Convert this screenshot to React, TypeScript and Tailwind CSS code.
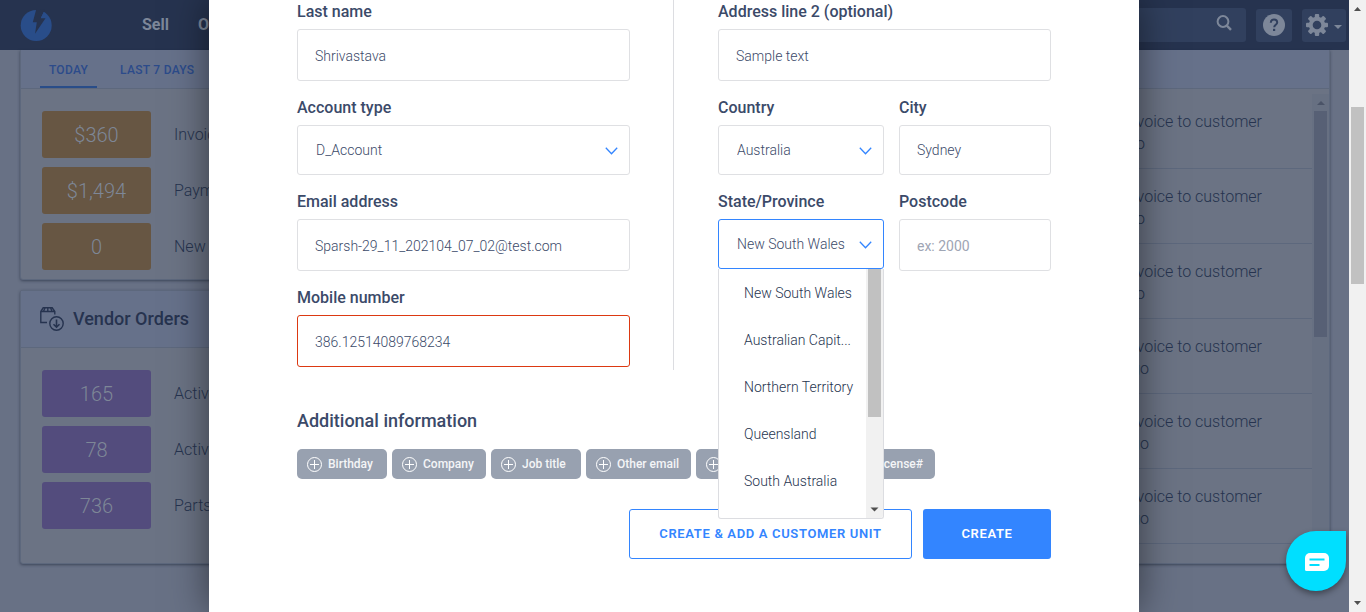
import React from 'react';

type FieldProps = {
  id: string;
  label: string;
  value?: string;
  placeholder?: string;
  box?: string;
};

function Label({ id, children }: { id: string; children: React.ReactNode }) {
  return (
    <label htmlFor={id} className="block text-base font-medium whitespace-nowrap text-[#3b4a69]">
      {children}
    </label>
  );
}

function TextField({ id, label, value, placeholder, box = 'h-[52px] border-[#dfe0e3] pt-[2px]' }: FieldProps) {
  return (
    <div className="flex min-w-0 flex-col gap-[5px]">
      <Label id={id}>{label}</Label>
      <input
        id={id}
        defaultValue={value}
        placeholder={placeholder}
        className={`w-full rounded-[3px] border bg-white px-[17px] text-sm font-light text-[#3b4a69] outline-none placeholder:font-normal placeholder:text-[#9ea5b4] ${box}`}
      />
    </div>
  );
}

function SelectField({ id, label, value, open, children }: { id: string; label: string; value: string; open?: boolean; children?: React.ReactNode }) {
  return (
    <div className="flex min-w-0 flex-col gap-[5px]">
      <Label id={id}>{label}</Label>
      <div className="relative">
        <select
          id={id}
          className={`h-[50px] w-full appearance-none rounded-[3px] border bg-white pr-8 pl-[18px] text-sm font-light text-[#3b4a69] outline-none ${open ? 'border-[#3385ff]' : 'border-[#dfe0e3]'}`}
        >
          <option>{value}</option>
        </select>
        <svg className="pointer-events-none absolute top-[22px] right-3 h-2 w-[13px]" viewBox="0 0 13 8" fill="none" stroke="#3385ff" strokeWidth="1.3">
          <path d="M.8 .8 6.5 6.8 12.2 .8" />
        </svg>
        {children}
      </div>
    </div>
  );
}

const states = ['New South Wales', 'Australian Capit...', 'Northern Territory', 'Queensland', 'South Australia'];

function StateMenu() {
  return (
    <div className="absolute top-full right-0 left-0 z-10 flex h-[250px] overflow-hidden rounded-b-[3px] border border-t-0 border-[#dcdde1] bg-white">
      <ul role="listbox" aria-label="State/Province" className="min-w-0 flex-1">
        {states.map((s) => (
          <li key={s} role="option" aria-selected={s === 'New South Wales'} className="flex h-[47px] items-center pl-[25px] text-sm font-light whitespace-nowrap text-[#26344f]">
            {s}
          </li>
        ))}
      </ul>
      <div className="flex w-[17px] flex-col justify-between bg-[#f1f1f1] px-[2px]">
        <div className="h-[148px] bg-[#c1c1c1]" />
        <svg className="mb-[6px] h-[5px] w-[13px]" viewBox="0 0 13 5" fill="#505050">
          <path d="M2.5 .5h8L6.500 4.500z" />
        </svg>
      </div>
    </div>
  );
}

const chips: [string, string][] = [
  ['Birthday', 'w-[90px]'],
  ['Company', 'w-[94px]'],
  ['Job title', 'w-[90px]'],
  ['Other email', 'w-[105px]'],
  ['Other phone', 'w-[111px]'],
  ['Driver license#', 'w-[123px]'],
];

function Modal() {
  return (
    <section role="dialog" aria-label="New customer" className="w-[930px] bg-white px-[88px] pb-[53px] shadow-[0_0_36px_rgba(0,0,0,0.5)]">
      <form>
        <div className="grid grid-cols-2">
          <div className="flex flex-col gap-[15px] border-r border-[#dcdde1] pr-[43px] pb-[3px]">
            <TextField id="last" label="Last name" value="Shrivastava" />
            <SelectField id="acct" label="Account type" value="D_Account" />
            <TextField id="email" label="Email address" value="Sparsh-29_11_202104_07_02@test.com" />
            <TextField id="mobile" label="Mobile number" value="386.12514089768234" box="h-[52px] border-[#dc3912] pt-px" />
          </div>
          <div className="flex flex-col gap-[15px] pl-[44px]">
            <TextField id="addr2" label="Address line 2 (optional)" value="Sample text" />
            <div className="grid grid-cols-[166fr_152fr] gap-[15px]">
              <SelectField id="country" label="Country" value="Australia" />
              <TextField id="city" label="City" value="Sydney" box="h-[50px] border-[#dfe0e3]" />
              <SelectField id="state" label="State/Province" value="New South Wales" open>
                <StateMenu />
              </SelectField>
              <TextField id="post" label="Postcode" placeholder="ex: 2000" />
            </div>
          </div>
        </div>
        <h2 className="mt-[39px] text-lg leading-6 font-medium text-[#3b4a69]">Additional information</h2>
        <div className="mt-4 flex gap-[5px]">
          {chips.map(([text, width]) => (
            <button key={text} type="button" className={`flex h-[30px] items-center gap-[6px] rounded-[5px] bg-[#98a1b0] pl-[10px] text-xs font-medium whitespace-nowrap text-[#f4f5f7] ${width}`}>
              <svg className="h-[15px] w-[15px] shrink-0" viewBox="0 0 15 15" fill="none" stroke="#fff" strokeWidth="1">
                <circle cx="7.500" cy="7.500" r="7" />
                <path d="M7.500 3v9M3 7.500h9" />
              </svg>
              {text}
            </button>
          ))}
        </div>
        <div className="mt-[30px] flex justify-end gap-[11px] text-[13px] font-semibold tracking-wider whitespace-nowrap">
          <button type="button" className="h-[50px] w-[283px] rounded-[3px] border border-[#3385ff] bg-white text-[#3385ff]">
            CREATE &amp; ADD A CUSTOMER UNIT
          </button>
          <button type="button" className="h-[50px] w-32 rounded-[3px] bg-[#3385ff] text-white">
            CREATE
          </button>
        </div>
      </form>
    </section>
  );
}

function Stats({ rows, tile }: { rows: [string, string][]; tile: string }) {
  return (
    <ul className="flex flex-col gap-[9px] px-[21px] pt-[22px]">
      {rows.map(([n, text]) => (
        <li key={n} className="flex items-center gap-[23px]">
          <span className={`flex h-[47px] w-[109px] items-center justify-center rounded-[3px] text-xl font-light text-[#7e8797] ${tile}`}>{n}</span>
          <span className="text-base font-light text-[#26334f]">{text}</span>
        </li>
      ))}
    </ul>
  );
}

function TopBar() {
  return (
    <header className="flex h-[50px] items-center bg-[#26334f] pr-[3px] pl-5 text-[#7d8799]">
      <svg className="h-8 w-8" viewBox="0 0 32 32">
        <circle cx="16.200" cy="16.500" r="15.500" fill="#294d89" />
        <path d="M16.300 0 12.800 13.300h4L15 24.800 25.500 9.200h-4.700L23 4.500 24.500 1 20 0z" fill="#26334f" />
        <path d="M23.800 3 20.800 9h4.700l2-2.800A15.500 15.500 0 0 0 23.800 3z" fill="#294d89" />
      </svg>
      <nav className="ml-[90px] flex gap-[29px] text-base font-bold">
        <a href="#sell">Sell</a>
        <a href="#orders">Orders</a>
      </nav>
      <div className="ml-auto flex items-center gap-[10px]">
        <div className="flex h-[34px] w-[220px] items-center justify-end rounded-[3px] bg-[#31405e] pr-[14px] pb-1">
          <svg className="h-4 w-4" viewBox="0 0 16 16" fill="none" stroke="currentColor" strokeWidth="2">
            <circle cx="7" cy="6.500" r="5.400" />
            <path d="m10.800 10.600 4.200 4.200" strokeWidth="2.400" />
          </svg>
        </div>
        <button aria-label="Help" className="flex h-[33px] w-9 items-center justify-center rounded-[3px] bg-[#31405e]">
          <svg className="h-[22px] w-[22px]" viewBox="0 0 22 22" fill="none">
            <circle cx="11" cy="11" r="11" fill="#7d8799" />
            <path d="M7.800 8.700C7.800 6.700 9.200 5.600 11 5.600s3.200 1.100 3.200 2.800c0 2.200-3 2.500-3 4.800" stroke="#31405e" strokeWidth="2" />
            <path d="M10 14.800h2.200V17H10z" fill="#31405e" />
          </svg>
        </button>
        <button aria-label="Settings" className="flex h-[33px] w-11 items-center justify-between rounded-[3px] bg-[#31405e] px-1">
          <svg className="h-[22px] w-[22px]" viewBox="0 0 22 22">
            <g fill="#7d8799">
              <circle cx="11" cy="11" r="8.200" />
              {[0, 45, 90, 135].map((a) => (
                <rect key={a} x="8.800" y="0" width="4.400" height="22" rx="1" transform={`rotate(${a} 11 11)`} />
              ))}
            </g>
            <circle cx="11" cy="11" r="4.300" fill="#31405e" />
          </svg>
          <svg className="mt-1 h-1 w-2" viewBox="0 0 8 4" fill="#7d8799">
            <path d="M0 0h8L4 4z" />
          </svg>
        </button>
      </div>
    </header>
  );
}

const card = 'border border-[#5d687d] bg-[#6b7384] shadow-[0_1px_3px_rgba(30,40,60,0.6)]';
const ages = ['1 day ago', '1 day ago', '1 day ago', '2 days ago', '2 days ago', '2 days ago'];

function Dashboard() {
  return (
    <div className="grid grid-cols-2 gap-5 pr-[19px] pl-5">
      <div className="flex flex-col gap-[10px]">
        <div className={`rounded-b-[3px] border-t-0 pb-[9px] ${card}`}>
          <div className="flex h-[39px] items-end gap-[13px] border-b border-[#5d687d] bg-[#66718a] pl-[19px] text-xs font-medium tracking-wide text-[#2c4b8a]">
            <a href="#today" className="flex h-9 w-[57px] items-start justify-center border-b-2 border-[#294d89] pt-[10px]">TODAY</a>
            <a href="#week" className="h-9 pt-[10px] pl-[10px]">LAST 7 DAYS</a>
          </div>
          <Stats tile="bg-[#675643]" rows={[['$360', 'Invoices'], ['$1,494', 'Payments'], ['0', 'New customers']]} />
        </div>
        <div className={`rounded-[3px] pb-[34px] ${card}`}>
          <div className="flex h-[57px] items-center gap-[9px] border-b border-[#5d687d] bg-[#66718a] pl-[19px]">
            <svg className="h-6 w-6" viewBox="0 0 24 24" fill="none" stroke="#26334f" strokeWidth="1.400">
              <path d="M7 15.500H.8V4.500L3.200.8h9l2.600 3.700V7.500M.8 4.500h14M7.800 .8v3.700M3.500 4.300 5 1M12 4.300 10.600 1" />
              <circle cx="16.500" cy="16.500" r="6.700" />
              <path d="M16.500 12.500v7.500M13.500 17.200l3 3 3-3" strokeWidth="1.600" />
            </svg>
            <h2 className="text-lg font-medium text-[#26334f]">Vendor Orders</h2>
          </div>
          <Stats tile="bg-[#534c7d]" rows={[['165', 'Active orders'], ['78', 'Active quotes'], ['736', 'Parts on order']]} />
        </div>
      </div>
      <div className={`flex flex-col rounded-b-[3px] border-t-0 ${card}`}>
        <div className="h-[39px] border-b border-[#5d687d] bg-[#66718a]" />
        <div className="flex flex-1 pt-[5px]">
          <ul className="flex-1 text-base leading-[22px] font-light text-[#26334f]">
            {ages.map((age, i) => (
              <li key={i} className="h-[75px] border-b border-[#5d687d] pt-[17px] text-right">
                <p className="pr-[50px]">Sent invoice to customer</p>
                <p className={i < 3 ? 'pr-[167px]' : 'pr-[163px]'}>{age}</p>
              </li>
            ))}
          </ul>
          <div className="flex w-[17px] flex-col items-center bg-[#677082]">
            <svg className="mt-[7px] mb-[6px] h-1 w-2" viewBox="0 0 8 4" fill="#4a5367">
              <path d="M0 4h8L4 0z" />
            </svg>
            <div className="h-[226px] w-[13px] bg-[#576075]" />
          </div>
        </div>
      </div>
    </div>
  );
}

export default function App() {
  return (
    <div className="flex min-h-screen font-[Roboto,'Liberation_Sans',sans-serif]">
      <main className="relative min-w-0 flex-1 overflow-hidden bg-[#687185]">
        <TopBar />
        <Dashboard />
        <div className="absolute inset-0 flex justify-center pr-px">
          <Modal />
        </div>
        <button aria-label="Chat" className="absolute right-[3px] bottom-[21px] flex h-[60px] w-[60px] items-center justify-center rounded-full rounded-tr-[6px] bg-[#00dfff] shadow-[0_3px_6px_rgba(0,0,0,0.4)]">
          <svg className="mt-[2px] ml-[2px] h-[18px] w-6" viewBox="0 0 24 18">
            <path d="M5 0h14a5 5 0 0 1 5 5v8a5 5 0 0 1-5 5H1.500A1.500 1.500 0 0 1 0 16.500V5a5 5 0 0 1 5-5z" fill="#fff" />
            <path d="M4.500 6.500h15M4.500 12h10" stroke="#00dfff" strokeWidth="1.800" />
          </svg>
        </button>
      </main>
      <div className="flex w-[17px] flex-col items-center bg-[#f1f1f1]">
        <svg className="mt-[7px] h-1 w-[7px]" viewBox="0 0 7 4" fill="#505050">
          <path d="M0 4h7L3.500 0z" />
        </svg>
        <div className="mt-24 h-[177px] w-[13px] bg-[#c1c1c1]" />
        <svg className="mt-auto mb-[7px] h-1 w-[7px]" viewBox="0 0 7 4" fill="#505050">
          <path d="M0 0h7L3.500 4z" />
        </svg>
      </div>
    </div>
  );
}
